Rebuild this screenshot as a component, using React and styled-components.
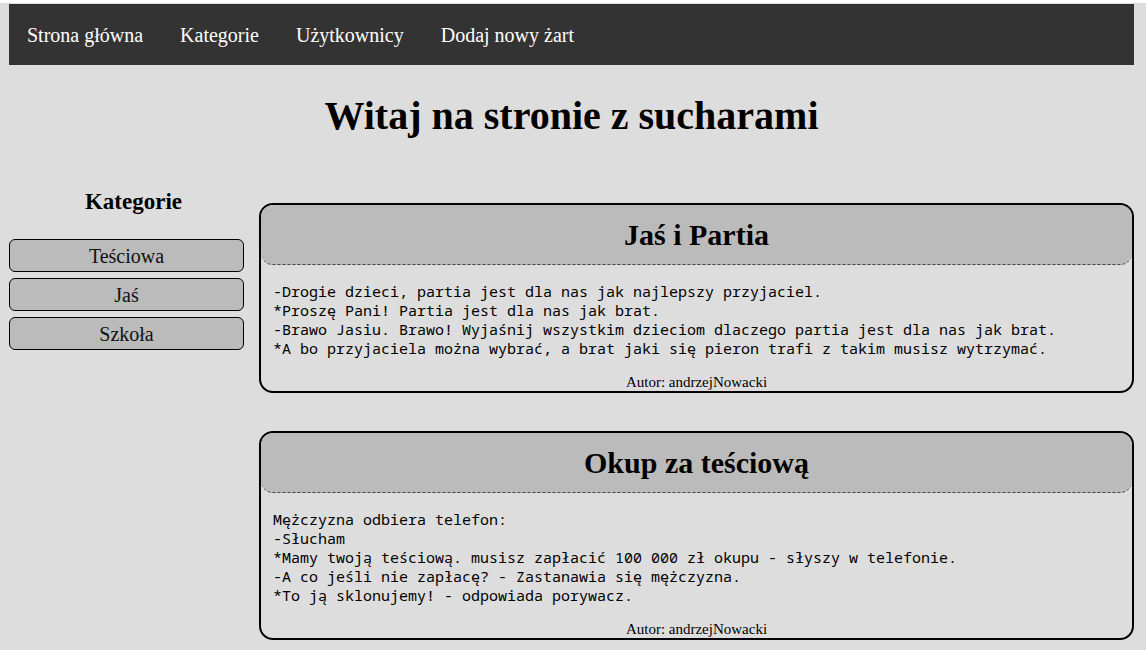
import React from "react";
import styled, { createGlobalStyle } from "styled-components";

const GlobalStyle = createGlobalStyle`
  html { background: #dddddd; }
  body {
    margin: 0;
    background: #dddddd;
    color: #000;
    font-family: "Liberation Serif", "Times New Roman", serif;
  }
  *, *::before, *::after { box-sizing: border-box; }
`;

const Page = styled.div`
  border-top: 3px solid #fff;
  padding: 1px 12px 8px 9px;
`;

const NavBar = styled.nav`
  display: flex;
  gap: 1px;
  background: #333;
`;

const NavLink = styled.a`
  padding: 19px 18px 17px;
  color: #fff;
  font-size: 20px;
  line-height: 25px;
  text-decoration: none;
  &:hover { background: #111; }
`;

const PageTitle = styled.h1`
  margin: 28px 0 42px;
  font-size: 40px;
  line-height: 46px;
  text-align: center;
`;

const Columns = styled.div`
  display: grid;
  grid-template-columns: 235px minmax(0, 1fr);
  column-gap: 15px;
  align-items: start;
`;

const Sidebar = styled.aside`
  display: flex;
  flex-direction: column;
  gap: 6px;
`;

const SidebarTitle = styled.h2`
  margin: 8px 0 18px;
  padding-left: 14px;
  font-size: 23px;
  line-height: 26px;
  text-align: center;
`;

const CategoryLink = styled.a`
  padding-top: 1px;
  border: 1px solid #000;
  border-radius: 6px;
  background: #bbb;
  color: #111;
  font-size: 20px;
  line-height: 30px;
  text-align: center;
  text-decoration: none;
`;

const JokeList = styled.main`
  display: flex;
  flex-direction: column;
  gap: 38px;
  padding-top: 22px;
`;

const JokeCard = styled.article`
  border: 2px solid #000;
  border-radius: 14px;
`;

const JokeTitle = styled.h2`
  margin: 0;
  padding: 12px 0;
  border-bottom: 1px dashed #444;
  border-radius: 12px;
  background: #bbb;
  font-size: 30px;
  line-height: 35px;
  text-align: center;
`;

const JokeText = styled.pre`
  margin: 17px 12px 16px;
  font-family: "Noto Sans Mono", "DejaVu Sans Mono", monospace;
  font-size: 15px;
  line-height: 19px;
  white-space: pre-wrap;
`;

const Author = styled.footer`
  font-size: 15px;
  line-height: 17px;
  text-align: center;
`;

const navigation = ["Strona główna", "Kategorie", "Użytkownicy", "Dodaj nowy żart"];
const categories = ["Teściowa", "Jaś", "Szkoła"];
const jokes = [
  {
    title: "Jaś i Partia",
    author: "andrzejNowacki",
    text: `-Drogie dzieci, partia jest dla nas jak najlepszy przyjaciel.
*Proszę Pani! Partia jest dla nas jak brat.
-Brawo Jasiu. Brawo! Wyjaśnij wszystkim dzieciom dlaczego partia jest dla nas jak brat.
*A bo przyjaciela można wybrać, a brat jaki się pieron trafi z takim musisz wytrzymać.`,
  },
  {
    title: "Okup za teściową",
    author: "andrzejNowacki",
    text: `Mężczyzna odbiera telefon:
-Słucham
*Mamy twoją teściową. musisz zapłacić 100 000 zł okupu - słyszy w telefonie.
-A co jeśli nie zapłacę? - Zastanawia się mężczyzna.
*To ją sklonujemy! - odpowiada porywacz.`,
  },
];

export default function App() {
  return (
    <>
      <GlobalStyle />
      <Page>
        <NavBar>
          {navigation.map((label) => (
            <NavLink key={label} href="#">{label}</NavLink>
          ))}
        </NavBar>
        <PageTitle>Witaj na stronie z sucharami</PageTitle>
        <Columns>
          <Sidebar>
            <SidebarTitle>Kategorie</SidebarTitle>
            {categories.map((name) => (
              <CategoryLink key={name} href="#">{name}</CategoryLink>
            ))}
          </Sidebar>
          <JokeList>
            {jokes.map((joke) => (
              <JokeCard key={joke.title}>
                <JokeTitle>{joke.title}</JokeTitle>
                <JokeText>{joke.text}</JokeText>
                <Author>Autor: {joke.author}</Author>
              </JokeCard>
            ))}
          </JokeList>
        </Columns>
      </Page>
    </>
  );
}
